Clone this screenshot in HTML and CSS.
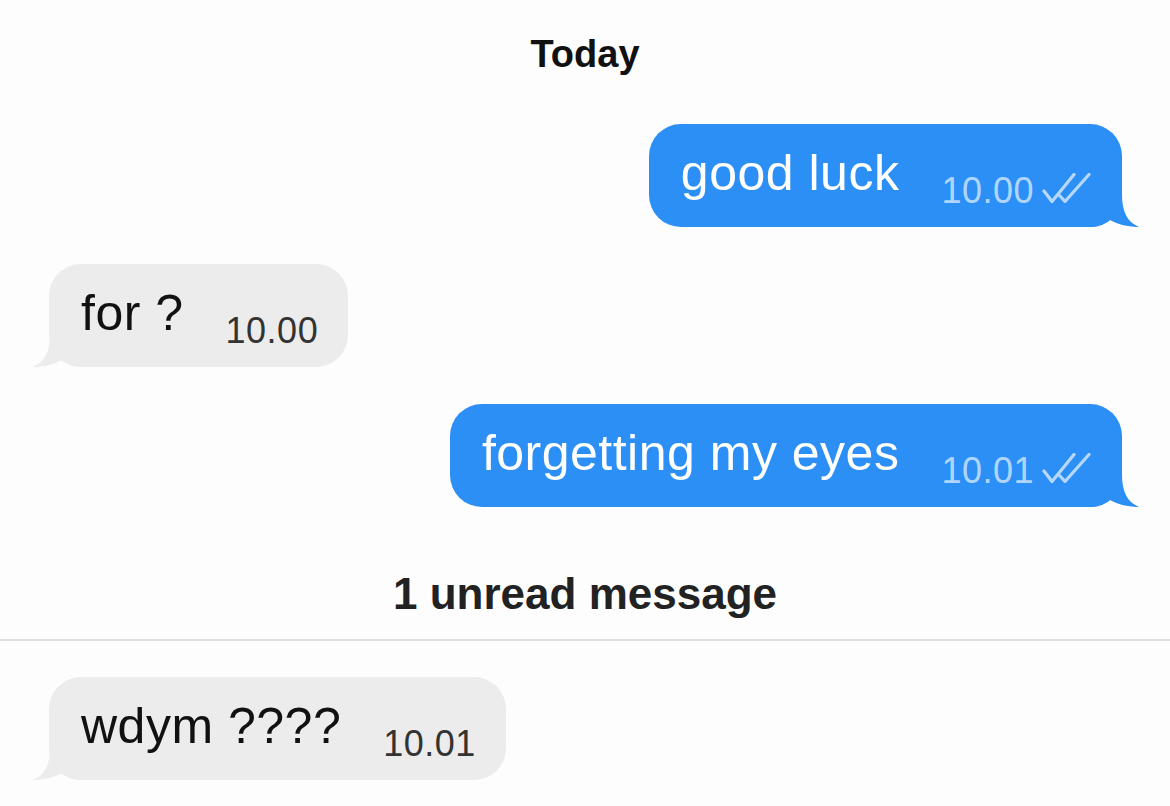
FILE: index.html
```html
<!DOCTYPE html>
<html lang="en">
<head>
<meta charset="utf-8">
<title>Chat</title>
<link rel="stylesheet" href="styles.css">
</head>
<body>
<div class="chat">
  <div class="day">Today</div>

  <div class="row out">
    <div class="bubble sent">
      <span class="msg">good luck</span><span class="time">10.00<svg class="ticks" viewBox="0 0 50 30" width="50" height="30"><path d="M2 18 L10 28.5 L32 1.5 M18 23 L23 28.5 L47 1.5"/></svg></span>
      <svg class="tail" viewBox="0 0 50 40" width="50" height="40"><path d="M0 0 L32 0 L32 8 C32 24 37 35 49 40 C40 40 29 38 20 33 C16 36 10 40 2 40 L0 40 Z"/></svg>
    </div>
  </div>

  <div class="row in">
    <div class="bubble recv">
      <span class="msg">for ?</span><span class="time">10.00</span>
      <svg class="tail" viewBox="0 0 50 40" width="50" height="40"><path d="M0 0 L32 0 L32 8 C32 24 37 35 49 40 C40 40 29 38 20 33 C16 36 10 40 2 40 L0 40 Z"/></svg>
    </div>
  </div>

  <div class="row out">
    <div class="bubble sent">
      <span class="msg">forgetting my eyes</span><span class="time">10.01<svg class="ticks" viewBox="0 0 50 30" width="50" height="30"><path d="M2 18 L10 28.5 L32 1.5 M18 23 L23 28.5 L47 1.5"/></svg></span>
      <svg class="tail" viewBox="0 0 50 40" width="50" height="40"><path d="M0 0 L32 0 L32 8 C32 24 37 35 49 40 C40 40 29 38 20 33 C16 36 10 40 2 40 L0 40 Z"/></svg>
    </div>
  </div>

  <div class="unread">1 unread message</div>
  <div class="divider"></div>

  <div class="row in last">
    <div class="bubble recv">
      <span class="msg">wdym ????</span><span class="time">10.01</span>
      <svg class="tail" viewBox="0 0 50 40" width="50" height="40"><path d="M0 0 L32 0 L32 8 C32 24 37 35 49 40 C40 40 29 38 20 33 C16 36 10 40 2 40 L0 40 Z"/></svg>
    </div>
  </div>
</div>
</body>
</html>
```

FILE: styles.css
```css
html, body {
  margin: 0;
  padding: 0;
  background: #fdfdfd;
}

body {
  font-family: "Liberation Sans", Arial, sans-serif;
  color: #111;
}

.chat {
  display: flex;
  flex-direction: column;
  width: 1170px;
  height: 806px;
  overflow: hidden;
}

.day {
  margin-top: 35px;
  text-align: center;
  font-size: 38px;
  line-height: 38px;
  font-weight: 700;
  color: #111;
}

.row {
  display: flex;
  padding: 0 48px 0 49px;
  margin-top: 37px;
}

.day + .row {
  margin-top: 51px;
}

.row.out {
  justify-content: flex-end;
}

.row.in {
  justify-content: flex-start;
}

.bubble {
  position: relative;
  box-sizing: border-box;
  height: 103px;
  padding: 24px 30px 0 32px;
  border-radius: 32px;
  font-size: 50px;
  line-height: 50px;
  white-space: nowrap;
}

.msg {
  letter-spacing: 0.5px;
}

.sent {
  background: #2b8ff6;
  color: #fff;
}

.recv {
  background: #ececec;
  color: #111;
}

.time {
  margin-left: 42px;
  font-size: 36px;
  line-height: 36px;
  letter-spacing: 0.5px;
  vertical-align: -13px;
}

.sent .time {
  color: rgba(255, 255, 255, 0.65);
}

.recv .time {
  color: #333;
}

.ticks {
  margin-left: 8px;
  fill: none;
  stroke: rgba(255, 255, 255, 0.65);
  stroke-width: 3.2;
  stroke-linecap: round;
  stroke-linejoin: round;
}

.tail {
  position: absolute;
  bottom: 0;
}

.sent .tail {
  right: -18px;
  fill: #2b8ff6;
}

.recv .tail {
  left: -17px;
  fill: #ececec;
  transform: scaleX(-1);
}

.unread {
  margin-top: 65px;
  text-align: center;
  font-size: 44px;
  line-height: 44px;
  font-weight: 700;
  color: #222;
}

.divider {
  margin-top: 23px;
  height: 2px;
  background: #e0e0e0;
}

.row.last {
  margin-top: 36px;
}
```
